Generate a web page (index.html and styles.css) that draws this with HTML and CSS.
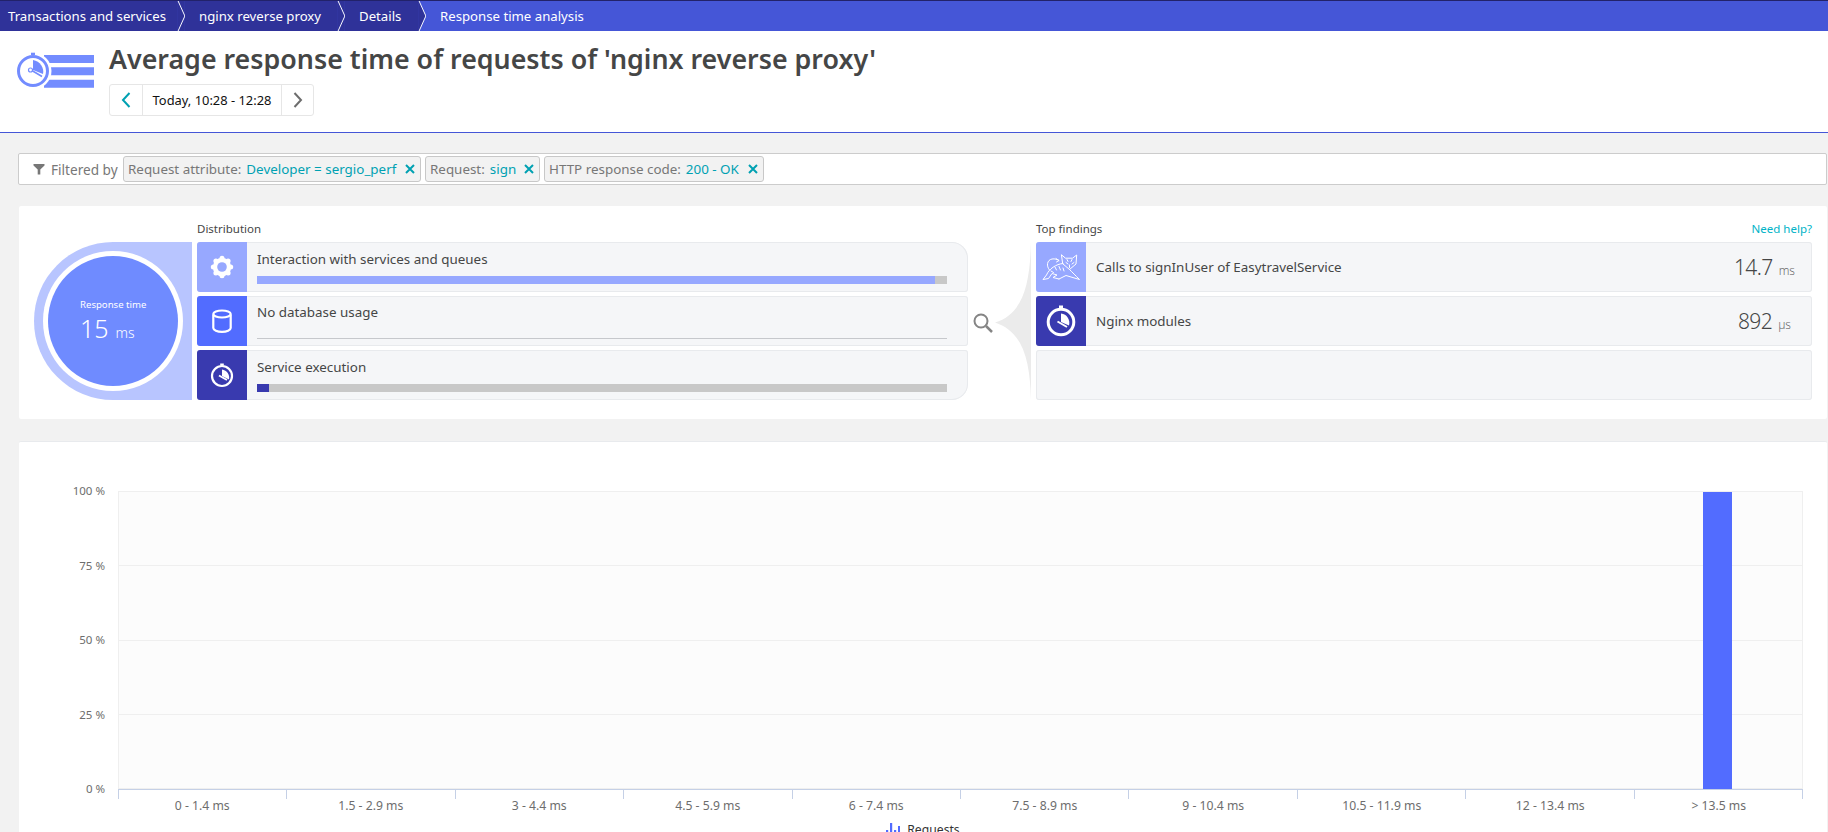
FILE: index.html
```html
<!DOCTYPE html>
<html lang="en">
<head>
<meta charset="utf-8">
<title>Response time analysis</title>
<link rel="stylesheet" href="styles.css">
</head>
<body>
<nav class="crumbs">
  <a class="crumb first">Transactions and services</a>
  <svg class="sep" viewBox="0 0 8 31"><path class="sep-l" d="M0 0H1L8 15.5 1 31H0Z"/><path class="sep-r-dark" d="M1 0H8V31H1L8 15.5Z"/><path class="sep-line" d="M1 0L8 15.5 1 31"/></svg>
  <a class="crumb second">nginx reverse proxy</a>
  <svg class="sep" viewBox="0 0 8 31"><path class="sep-l" d="M0 0H1L8 15.5 1 31H0Z"/><path class="sep-r-dark" d="M1 0H8V31H1L8 15.5Z"/><path class="sep-line" d="M1 0L8 15.5 1 31"/></svg>
  <a class="crumb third">Details</a>
  <svg class="sep" viewBox="0 0 8 31"><path class="sep-l" d="M0 0H1L8 15.5 1 31H0Z"/><path class="sep-r-light" d="M1 0H8V31H1L8 15.5Z"/><path class="sep-line" d="M1 0L8 15.5 1 31"/></svg>
  <a class="crumb current">Response time analysis</a>
</nav>

<header class="head">
  <svg class="head-icon" viewBox="0 0 78 38">
    <path class="hi-bar" d="M27 3H77V11H27ZM27 15.300H77V23.300H27ZM27 27.700H77V35.700H27Z"/>
    <circle class="hi-halo" cx="16" cy="19" r="18.500"/>
    <circle class="hi-ring" cx="16" cy="19" r="14.500"/>
    <path class="hi-fill" d="M14 0.700H18V3H14Z"/>
    <path class="hi-fill" d="M16 8V18L26 22C27.500 16 23 9 16 8Z"/>
    <path class="hi-needle" d="M14 18L25 24.500"/>
    <circle class="hi-hub" cx="13.500" cy="18" r="2"/>
  </svg>
  <div class="head-main">
    <h1 class="title">Average response time of requests of 'nginx reverse proxy'</h1>
    <div class="timenav">
      <span class="tn-btn"><svg class="tn-ico" viewBox="0 0 12 18"><path class="tn-teal" d="M9.500 2L3 9l6.500 7"/></svg></span>
      <span class="tn-label">Today, 10:28 - 12:28</span>
      <span class="tn-btn last"><svg class="tn-ico" viewBox="0 0 12 18"><path class="tn-grey" d="M2.500 2L9 9l-6.500 7"/></svg></span>
    </div>
  </div>
</header>

<section class="filter">
  <svg class="funnel" viewBox="0 0 12 12"><path d="M0.500 1H11.500V2.500L7.300 6.500V11.500H4.700V6.500L0.500 2.500Z"/></svg>
  <span class="filter-label">Filtered by</span>
  <span class="chip chip-a"><span class="chip-k">Request attribute:</span><span class="chip-v">Developer = sergio_perf</span><svg class="chip-x" viewBox="0 0 10 10"><path d="M1 1L9 9M9 1L1 9"/></svg></span>
  <span class="chip chip-b"><span class="chip-k">Request:</span><span class="chip-v">sign</span><svg class="chip-x" viewBox="0 0 10 10"><path d="M1 1L9 9M9 1L1 9"/></svg></span>
  <span class="chip chip-c"><span class="chip-k">HTTP response code:</span><span class="chip-v">200 - OK</span><svg class="chip-x" viewBox="0 0 10 10"><path d="M1 1L9 9M9 1L1 9"/></svg></span>
</section>

<section class="card summary">
  <div class="col-gauge">
    <div class="gauge">
      <div class="gauge-ring">
        <div class="gauge-core">
          <span class="gauge-cap">Response time</span>
          <span class="gauge-val">15<small class="gauge-unit">ms</small></span>
        </div>
      </div>
    </div>
  </div>
  <div class="col-dist">
    <h2 class="col-title">Distribution</h2>
    <div class="rows">
      <div class="row row-top">
        <span class="tile t-light"><svg class="tile-ico" viewBox="0 0 50 50">
          <g class="w"><circle cx="25" cy="25" r="9.200"/><circle cx="25" cy="16.300" r="2.500"/><circle cx="25" cy="33.700" r="2.500"/><circle cx="16.300" cy="25" r="2.500"/><circle cx="33.700" cy="25" r="2.500"/><circle cx="18.900" cy="18.900" r="2.500"/><circle cx="31.100" cy="18.900" r="2.500"/><circle cx="18.900" cy="31.100" r="2.500"/><circle cx="31.100" cy="31.100" r="2.500"/></g>
          <circle class="gear-hole" cx="25" cy="25" r="4.800"/>
        </svg></span>
        <div class="row-body">
          <span class="row-name">Interaction with services and queues</span>
          <div class="track"><div class="fill fill-light" style="width:98.3%"></div></div>
        </div>
      </div>
      <div class="row">
        <span class="tile t-mid"><svg class="tile-ico" viewBox="0 0 50 50">
          <path class="s" d="M16.300 18.500V32c0 2 3.900 3.800 8.700 3.800s8.700-1.800 8.700-3.800V18.500"/><ellipse class="s" cx="25" cy="18" rx="8.700" ry="3.500"/>
        </svg></span>
        <div class="row-body body-rule">
          <span class="row-name">No database usage</span>
          <div class="rule"></div>
        </div>
      </div>
      <div class="row row-bottom">
        <span class="tile t-dark"><svg class="tile-ico" viewBox="0 0 50 50">
          <circle class="s" cx="25" cy="26" r="10"/><path class="w" d="M23.200 13.500H26.800V15.500H23.200Z"/><path class="w" d="M25 19.500V26L32 29.500C33 25 30 20 25 19.500Z"/><path class="needle" d="M22 25.500L30 30"/>
        </svg></span>
        <div class="row-body">
          <span class="row-name">Service execution</span>
          <div class="track"><div class="fill fill-dark" style="width:1.75%"></div></div>
        </div>
      </div>
    </div>
  </div>
  <div class="col-link">
    <svg class="link-svg" viewBox="0 0 68 158">
      <path class="wedge" d="M63 0C62 40 56 72 27 80.500C56 90 62 120 63 158Z"/>
      <circle class="lens" cx="13" cy="79" r="6.500"/>
      <path class="lens-h" d="M18 84L24 90"/>
    </svg>
  </div>
  <div class="col-find">
    <div class="find-head">
      <h2 class="col-title">Top findings</h2>
      <a class="help">Need help?</a>
    </div>
    <div class="rows">
      <div class="row find">
        <span class="tile t-light"><svg class="tile-ico" viewBox="0 0 50 50">
          <g class="cat">
            <path d="M25.700 13L29.500 16.200H36.500L40.700 13L40 22L33.500 27.500L27 22Z"/>
            <path d="M30 20.500L32 22M38 20.500L36 22M33.500 23V25.500M31 17.500L32 19.500M36 17.500L35 19.500"/>
            <path d="M27 21.500C20 22 13 27 10.500 33L7 37.500L12.500 36.500L16 31.500L21 33L17 35.500L23 37"/>
            <path d="M33.500 27.500C37 31 39 33 43.500 37.500L30 33.500L23 37"/>
            <path d="M13.500 28C10 24 11 18 16 17C19 16.500 21 17.500 23 18.500L20.500 20M23 18.500L20 16.500"/>
            <path d="M19 25L20.500 28M23 24.500L24.500 28M27 26L28 29M15 29L17.500 30.500"/>
          </g>
        </svg></span>
        <span class="row-name">Calls to signInUser of EasytravelService</span>
        <span class="find-val">14.7<small class="find-unit">ms</small></span>
      </div>
      <div class="row find">
        <span class="tile t-dark"><svg class="tile-ico" viewBox="0 0 50 50">
          <circle class="s thick" cx="25" cy="26" r="12.800"/><path class="w" d="M23 9.500H27V12H23Z"/><path class="w" d="M25 17.500V26L33 29.500C34.500 24 31 18 25 17.500Z"/><path class="needle" d="M21.500 25.500L31 31"/>
        </svg></span>
        <span class="row-name">Nginx modules</span>
        <span class="find-val v2">892<small class="find-unit">µs</small></span>
      </div>
      <div class="row find"></div>
    </div>
  </div>
</section>

<section class="card chart">
  <div class="chart-main">
    <div class="yaxis">
      <span class="ylab">100 %</span>
      <span class="ylab">75 %</span>
      <span class="ylab">50 %</span>
      <span class="ylab">25 %</span>
      <span class="ylab">0 %</span>
    </div>
    <div class="plot-col">
      <div class="plot">
        <div class="band"></div><div class="band"></div><div class="band"></div><div class="band"></div>
        <div class="bar"></div>
      </div>
      <div class="ticks"><i></i><i></i><i></i><i></i><i></i><i></i><i></i><i></i><i></i><i></i></div>
      <div class="xlabs">
        <span>0 - 1.4 ms</span><span>1.5 - 2.9 ms</span><span>3 - 4.4 ms</span><span>4.5 - 5.9 ms</span><span>6 - 7.4 ms</span><span>7.5 - 8.9 ms</span><span>9 - 10.4 ms</span><span>10.5 - 11.9 ms</span><span>12 - 13.4 ms</span><span>&gt; 13.5 ms</span>
      </div>
    </div>
  </div>
  <div class="legend">
    <svg class="legend-ico" viewBox="0 0 14 14"><path d="M0 7H2.200V14H0ZM4 0H6.200V14H4ZM8 7H10.200V14H8ZM12 3H14V14H12Z"/></svg>
    <span>Requests</span>
  </div>
</section>
</body>
</html>
```
FILE: styles.css
```css
* { box-sizing: border-box; }
html, body { margin: 0; height: 832px; overflow: hidden; }
body { background: #f2f2f2; font-family: "Noto Sans", "Open Sans", sans-serif; color: #454646; }

/* breadcrumbs */
.crumbs { display: flex; height: 31px; background: #4556d7; border-top: 1px solid #22226a; }
.crumb { display: flex; align-items: center; height: 30px; color: #fff; font-size: 13.2px; white-space: nowrap; background: #2f3299; }
.crumb.first { width: 177px; padding-left: 8px; }
.crumb.second { width: 152px; padding-left: 14px; }
.crumb.third { width: 73px; padding-left: 14px; }
.crumb.current { background: none; padding-left: 14px; }
.sep { width: 8px; height: 30px; flex: none; }
.sep-l { fill: #2f3299; }
.sep-r-dark { fill: #2f3299; }
.sep-r-light { fill: #4556d7; }
.sep-line { fill: none; stroke: #fff; stroke-width: 1; }

/* header */
.head { display: flex; height: 102px; background: #fff; border-bottom: 1px solid #4556d7; padding-left: 17px; }
.head-icon { width: 78px; height: 38px; margin-top: 21px; flex: none; }
.hi-bar { fill: #738cff; }
.hi-halo { fill: #fff; }
.hi-ring { fill: none; stroke: #738cff; stroke-width: 3; }
.hi-fill { fill: #738cff; }
.hi-needle { stroke: #738cff; stroke-width: 1.5; fill: none; }
.hi-hub { fill: #fff; stroke: #738cff; stroke-width: 1.2; }
.head-main { margin-left: 14px; }
.title { margin: 10px 0 0; font-size: 26.8px; line-height: 36px; font-weight: 600; color: #454646; white-space: nowrap; }
.timenav { display: inline-flex; height: 32px; margin-top: 7px; border: 1px solid #e6e6e6; border-radius: 3px; }
.tn-btn { display: flex; width: 32px; align-items: center; justify-content: center; }
.tn-btn.last { width: 31px; }
.tn-ico { width: 12px; height: 18px; }
.tn-teal { fill: none; stroke: #00a1b2; stroke-width: 2; }
.tn-grey { fill: none; stroke: #6d6d6d; stroke-width: 2; }
.tn-label { display: flex; align-items: center; justify-content: center; width: 140px; border-left: 1px solid #e6e6e6; border-right: 1px solid #e6e6e6; font-size: 12.9px; color: #111; white-space: nowrap; }

/* filter */
.filter { display: flex; align-items: center; height: 32px; margin: 20px 1px 0 18px; background: #fff; border: 1px solid #ccc; border-radius: 2px; padding-left: 14px; }
.funnel { width: 12px; height: 12px; flex: none; }
.funnel path { fill: #777; }
.filter-label { margin-left: 6px; width: 72px; font-size: 13.6px; color: #777; white-space: nowrap; }
.chip { display: flex; align-items: center; height: 26px; margin-right: 4px; padding: 0 4px; background: #f2f2f2; border: 1px solid #c8c8c8; border-radius: 3px; font-size: 13.4px; white-space: nowrap; }
.chip-a { width: 298px; }
.chip-b { width: 115px; }
.chip-c { width: 220px; }
.chip-k { color: #777; }
.chip-v { margin-left: 5px; color: #00a1b2; }
.chip-x { width: 10px; height: 10px; margin-left: auto; margin-right: 1px; flex: none; }
.chip-x path { stroke: #00a1b2; stroke-width: 2; fill: none; }

/* cards */
.card { margin: 21px 1px 0 19px; background: #fff; border-radius: 2px; }
.summary { display: flex; height: 213px; padding: 0 15px; }
.col-gauge { width: 163px; padding-top: 36px; flex: none; }
.gauge { width: 158px; height: 158px; padding: 9px 0 0 9px; background: #b8c5ff; border-radius: 79px 0 0 79px; }
.gauge-ring { width: 140px; height: 140px; padding: 5px; background: #fff; border-radius: 50%; }
.gauge-core { display: flex; flex-direction: column; width: 130px; height: 130px; padding: 41px 0 0 32px; background: #6f8bff; border-radius: 50%; color: #fff; }
.gauge-cap { font-size: 9.6px; line-height: 16px; white-space: nowrap; }
.gauge-val { font-size: 25px; line-height: 30px; font-weight: 300; white-space: nowrap; }
.gauge-unit { font-size: 14px; margin-left: 7px; }

.col-dist { width: 771px; flex: none; }
.col-title { margin: 0; height: 36px; padding-top: 15px; font-size: 11.5px; line-height: 16px; font-weight: 400; color: #454646; }
.rows { display: flex; flex-direction: column; gap: 4px; }
.row { display: flex; height: 50px; background: #f5f6f8; border-radius: 3px; box-shadow: inset 0 0 0 1px #e8eaed; }
.row-top { border-top-right-radius: 16px; }
.row-bottom { border-bottom-right-radius: 16px; }
.tile { display: block; width: 50px; height: 50px; flex: none; border-radius: 3px 0 0 3px; }
.t-light { background: #97a8ff; }
.t-mid { background: #526cff; }
.t-dark { background: #393aaf; }
.tile-ico { display: block; width: 50px; height: 50px; }
.w { fill: #fff; }
.s { fill: none; stroke: #fff; stroke-width: 2.2; }
.s.thick { stroke-width: 3; }
.gear-hole { fill: #97a8ff; }
.needle { stroke: #fff; stroke-width: 2; fill: none; }
.cat { fill: none; stroke: #fff; stroke-width: 1; stroke-linejoin: round; stroke-linecap: round; }
.row-body { flex: 1; padding: 7px 21px 0 10px; }
.body-rule { padding-top: 6px; }
.row-name { display: block; font-size: 13.4px; line-height: 20px; color: #454646; white-space: nowrap; }
.track { height: 8px; margin-top: 7px; background: #c8c8c8; }
.fill { height: 8px; }
.fill-light { background: #97a8ff; }
.fill-dark { background: #393aaf; }
.rule { height: 1px; margin-top: 16px; background: #c6c8cc; }

.col-link { width: 68px; padding-top: 36px; flex: none; }
.link-svg { display: block; width: 68px; height: 158px; }
.wedge { fill: #ebebeb; }
.lens { fill: none; stroke: #858585; stroke-width: 2; }
.lens-h { stroke: #858585; stroke-width: 2.5; fill: none; }

.col-find { flex: 1; }
.find-head { display: flex; justify-content: space-between; }
.help { padding-top: 15px; font-size: 11.5px; line-height: 16px; color: #00b3c7; }
.find { align-items: center; }
.find .row-name { margin-left: 10px; }
.find-val { margin-left: auto; padding-right: 17px; font-size: 21px; font-weight: 300; letter-spacing: -0.6px; color: #454646; white-space: nowrap; }
.find-val.v2 { padding-right: 21px; }
.find-unit { font-size: 12px; letter-spacing: 0; margin-left: 6px; color: #6d6d6d; }

/* chart */
.chart { height: 420px; margin-top: 22px; border-top: 1px solid #e8eaed; padding: 41px 24px 0 0; }
.chart-main { display: flex; }
.yaxis { display: flex; flex-direction: column; justify-content: space-between; align-items: flex-end; width: 86px; height: 314px; flex: none; }
.ylab { height: 16px; font-size: 11.5px; line-height: 16px; color: #6d6d6d; white-space: nowrap; }
.plot-col { flex: 1; margin-left: 13px; padding-top: 8px; }
.plot { position: relative; display: flex; flex-direction: column; height: 298px; background: #fcfcfc; border: 1px solid #efefef; border-bottom: 0; }
.band { flex: 1; border-bottom: 1px solid #efefef; }
.band:last-of-type { border-bottom: 0; }
.bar { position: absolute; top: 0; bottom: 0; right: 70px; width: 29px; background: #526cff; }
.ticks { display: flex; height: 10px; border-top: 1px solid #c5d0e6; border-right: 1px solid #c5d0e6; }
.ticks i { flex: 1; border-left: 1px solid #c5d0e6; }
.xlabs { display: flex; }
.xlabs span { flex: 1; text-align: center; font-size: 12.2px; line-height: 14px; color: #6d6d6d; white-space: nowrap; }
.legend { display: flex; align-items: center; justify-content: center; gap: 7px; margin: 9px -24px 0 0; font-size: 12.2px; line-height: 16px; color: #333; }
.legend-ico { width: 14px; height: 14px; flex: none; }
.legend-ico path { fill: #526cff; }
```
